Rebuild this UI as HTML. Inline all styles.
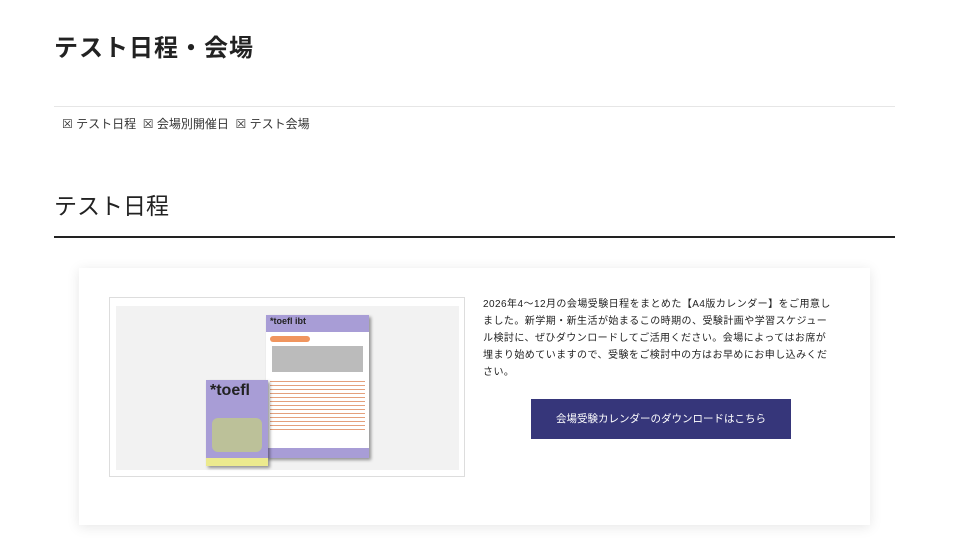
<!DOCTYPE html>
<html><head><meta charset="utf-8"><style>
*{margin:0;padding:0;box-sizing:border-box}
body{width:960px;height:540px;background:#fff;font-family:"Liberation Sans","Noto Sans CJK JP",sans-serif;color:#222;position:relative;overflow:hidden}
.a{position:absolute}
</style></head><body>
<div class="a" style="left:54px;top:28px;font-size:24px;font-weight:bold;letter-spacing:1px">テスト日程・会場</div>
<div class="a" style="left:54px;top:106px;width:841px;height:1px;background:#e6e6e6"></div>
<div class="a" style="left:62px;top:115px;font-size:12px;color:#333;white-space:nowrap">☒ テスト日程&nbsp;&nbsp;☒ 会場別開催日&nbsp;&nbsp;☒ テスト会場</div>
<div class="a" style="left:54px;top:187px;font-size:23px;color:#222">テスト日程</div>
<div class="a" style="left:54px;top:236px;width:841px;height:2px;background:#222"></div>
<div class="a" style="left:79px;top:268px;width:791px;height:257px;background:#fff;box-shadow:0 2px 12px rgba(0,0,0,.1)"></div>
<div class="a" style="left:109px;top:297px;width:356px;height:180px;border:1px solid #ddd;background:#fff"></div>
<div class="a" style="left:116px;top:306px;width:343px;height:164px;background:#f2f2f2"></div>
<div class="a" style="left:266px;top:315px;width:103px;height:143px;background:#fff;box-shadow:2px 2px 3px rgba(0,0,0,.4)">
 <div style="height:17px;background:#a89dd6;font-size:9px;font-weight:bold;padding:1px 4px;color:#222">*toefl ibt</div>
 <div style="margin:4px 4px;height:6px;width:40px;background:#f0955e;border-radius:3px"></div>
 <div style="margin:3px 6px;height:26px;background:#bbb"></div>
 <div style="margin:6px 4px;height:52px;background:repeating-linear-gradient(#fff 0 3px,#e4a07c 3px 4px)"></div>
 <div style="position:absolute;bottom:0;left:0;right:0;height:10px;background:#a89dd6"></div>
</div>
<div class="a" style="left:206px;top:380px;width:62px;height:86px;background:#a89dd6;box-shadow:2px 2px 3px rgba(0,0,0,.4)">
 <div style="font-size:16px;font-weight:bold;padding:2px 4px;color:#222">*toefl</div>
 <div style="margin:16px 6px 0;height:34px;background:#c9d870;opacity:.6;border-radius:6px"></div>
 <div style="position:absolute;bottom:0;left:0;right:0;height:8px;background:#ecea8e"></div>
</div>
<div class="a" style="left:483px;top:296px;width:352px;font-size:10px;letter-spacing:0.45px;line-height:17px;color:#222">2026年4～12月の会場受験日程をまとめた【A4版カレンダー】をご用意しました。新学期・新生活が始まるこの時期の、受験計画や学習スケジュール検討に、ぜひダウンロードしてご活用ください。会場によってはお席が埋まり始めていますので、受験をご検討中の方はお早めにお申し込みください。</div>
<div class="a" style="left:531px;top:399px;width:260px;height:40px;background:#36367a;color:#fff;font-size:10.5px;text-align:center;line-height:40px">会場受験カレンダーのダウンロードはこちら</div>
</body></html>
